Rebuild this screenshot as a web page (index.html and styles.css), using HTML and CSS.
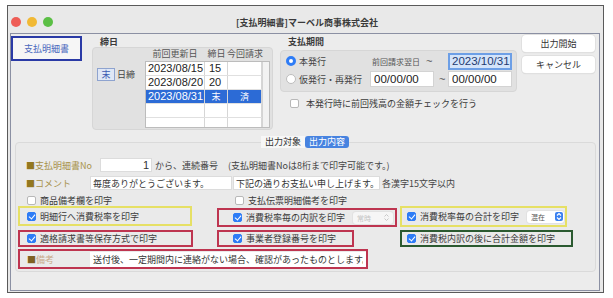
FILE: index.html
```html
<!DOCTYPE html>
<html>
	<head>
		<meta charset="utf-8">
		<title>支払明細書</title>
		<link rel="stylesheet" href="styles.css">
	</head>
	<body>
		<div class="window">
			<div class="titlebar">
				<div class="lights">
					<span class="dot red"></span>
					<span class="dot yellow"></span>
					<span class="dot green"></span>
				</div>
				<div class="title">[支払明細書]マーベル商事株式会社</div>
			</div>
			<div class="content">
				<div class="top">
					<div class="side">
						<div class="side-tab">支払明細書</div>
					</div>
					<div class="shime">
						<div class="group-label">締日</div>
						<div class="group shime-box">
							<div class="matsu"><span class="matsu-key">末</span>日締</div>
							<div class="table-col">
								<div class="thead">
									<span>前回更新日</span><span>締日</span><span>今回請求</span>
								</div>
								<div class="tbox">
									<div class="tbody">
										<div class="trow"><span>2023/08/15</span><span>15</span><span></span></div>
										<div class="trow"><span>2023/08/20</span><span>20</span><span></span></div>
										<div class="trow sel"><span>2023/08/31</span><span class="c">末</span><span class="c">済</span></div>
										<div class="trow"><span></span><span></span><span></span></div>
										<div class="trow"><span></span><span></span><span></span></div>
									</div>
									<div class="strip"></div>
								</div>
							</div>
						</div>
					</div>
					<div class="period">
						<div class="group-label">支払期間</div>
						<div class="group period-box">
							<div class="prow">
								<label class="opt"><span class="rb on"></span>本発行</label>
								<div class="mid"><span class="from">前回請求翌日</span><span class="tilde">~</span></div>
								<input class="date focus" value="2023/10/31">
							</div>
							<div class="prow">
								<label class="opt"><span class="rb"></span>仮発行・再発行</label>
								<div class="mid"><input class="date" value="00/00/00"><span class="tilde">~</span></div>
								<input class="date" value="00/00/00">
							</div>
						</div>
						<label class="ck check-row"><span class="cb"></span>本発行時に前回残高の金額チェックを行う</label>
					</div>
					<div class="buttons">
						<div class="btn">出力開始</div>
						<div class="btn">キャンセル</div>
					</div>
				</div>

				<div class="tabs">
					<span class="tab">出力対象</span><span class="tab on">出力内容</span>
				</div>

				<div class="panel">
					<div class="row r1">
						<span class="lbl w74"><b>■</b>支払明細書No</span>
						<input class="field no" value="1">
						<span class="after">から、連続番号</span>
						<span class="note">(支払明細書Noは8桁まで印字可能です。)</span>
					</div>
					<div class="row r2">
						<span class="lbl w64"><b>■</b>コメント</span>
						<input class="field c1" value="毎度ありがとうございます。">
						<input class="field c2" value="下記の通りお支払い申し上げます。">
						<span class="hint">各漢字15文字以内</span>
					</div>
					<div class="row r3">
						<label class="ck w208"><span class="cb"></span>商品備考欄を印字</label>
						<label class="ck"><span class="cb"></span>支払伝票明細備考を印字</label>
					</div>
					<div class="grid r4">
						<div class="mark yellow b1"><label class="ck"><span class="cb on"></span>明細行へ消費税率を印字</label></div>
						<div class="mark red b2">
							<label class="ck"><span class="cb on"></span>消費税率毎の内訳を印字</label>
							<span class="pop off">常時<svg width="7" height="9" viewBox="0 0 7 9"><path d="M1.5 3.5L3.5 1.5L5.5 3.5M1.5 5.5L3.5 7.5L5.5 5.5" stroke="#c8c8c8" fill="none" stroke-width="1"/></svg></span>
						</div>
						<div class="mark yellow b3">
							<label class="ck"><span class="cb on"></span>消費税率毎の合計を印字</label>
							<span class="pop">混在<span class="step"><svg width="8" height="9" viewBox="0 0 8 9"><path d="M2 3.5L4 1.5L6 3.5M2 5.5L4 7.5L6 5.5" stroke="#fff" fill="none" stroke-width="1.2"/></svg></span></span>
						</div>
					</div>
					<div class="grid r5">
						<div class="mark red b4"><label class="ck"><span class="cb on"></span>適格請求書等保存方式で印字</label></div>
						<div class="mark red b5"><label class="ck"><span class="cb on"></span>事業者登録番号を印字</label></div>
						<div class="mark green b6"><label class="ck"><span class="cb on"></span>消費税内訳の後に合計金額を印字</label></div>
					</div>
					<div class="row r6">
						<div class="mark red b7">
							<span class="lbl w63 faded"><b>■</b>備考</span>
							<input class="field memo" value="送付後、一定期間内に連絡がない場合、確認があったものとします。">
						</div>
					</div>
				</div>
			</div>
		</div>
	</body>
</html>
```

FILE: styles.css
```css
* {
	margin: 0;
	padding: 0;
	box-sizing: border-box;
}

body {
	background: #fff;
	font-family: "Noto Sans CJK JP", "Liberation Sans", sans-serif;
	font-size: 9px;
	color: #333;
}

input {
	font: inherit;
	color: inherit;
	outline: none;
}

.window {
	width: 597px;
	height: 288px;
	margin: 5px 0 0 7px;
	border: 1px solid #5a5a5a;
	background: #e8e8e8;
	display: flex;
	flex-direction: column;
}

/* title bar */
.titlebar {
	height: 27px;
	display: grid;
	grid-template-columns: 1fr auto 1fr;
	align-items: center;
	padding: 5px 0 0 3px;
	background: #e9e9e9;
}

.lights {
	display: flex;
	gap: 6px;
}

.dot {
	width: 10px;
	height: 10px;
	border-radius: 50%;
}

.dot.red { background: #ee5d56; }
.dot.yellow { background: #f1b935; }
.dot.green { background: #5bbf45; }

.title {
	font-weight: bold;
	color: #3a3a3a;
}

.content {
	flex: 1;
	margin: 0 3px 1px 2px;
	border: 1px solid #8b90a3;
	background: #ececec;
}

/* upper area */
.top {
	display: flex;
	height: 102px;
}

.side {
	width: 81px;
	padding-top: 2px;
}

.side-tab {
	width: 71px;
	height: 25px;
	border: 2px solid #2a3aa6;
	background: #f6f6f6;
	color: #4a68bd;
	display: flex;
	align-items: center;
	justify-content: center;
}

.group-label {
	margin-top: 3px;
	padding-left: 8px;
	height: 10px;
	line-height: 10px;
	font-weight: bold;
	color: #3a3a3a;
}

.group {
	background: #e1e1e1;
	border: 1px solid #d6d6d6;
	border-radius: 4px;
}

.shime {
	width: 181px;
}

.shime-box {
	height: 83px;
	display: flex;
}

.matsu {
	width: 52px;
	padding: 20px 0 0 4px;
	display: flex;
	align-items: flex-start;
	gap: 2px;
	line-height: 13px;
	color: #444;
}

.matsu-key {
	width: 18px;
	height: 13px;
	border: 1px solid #8ea3cf;
	background: #dfe7f6;
	color: #3c5ab2;
	text-align: center;
	line-height: 11px;
}

.thead {
	display: grid;
	grid-template-columns: 60px 23px 34px;
	height: 13px;
	line-height: 12px;
	text-align: center;
	white-space: nowrap;
	color: #555;
}

.thead span {
	display: flex;
	justify-content: center;
}

.tbox {
	width: 125px;
	height: 67px;
	border: 1px solid #bcbcbc;
	background: #fff;
	display: flex;
	overflow: hidden;
}

.tbody {
	width: 116px;
}

.trow {
	display: grid;
	grid-template-columns: 59px 23px 34px;
	height: 14px;
	border-bottom: 1px solid #e0e0e0;
	font-family: "Liberation Sans", "Noto Sans CJK JP", sans-serif;
	font-size: 11px;
	line-height: 13px;
	color: #222;
}

.trow span {
	border-right: 1px solid #d6d6d6;
	padding-left: 2px;
}

.trow span:nth-child(2) {
	padding-left: 4px;
}

.trow .c {
	text-align: center;
	padding-left: 0 !important;
	font-family: "Noto Sans CJK JP", sans-serif;
	font-size: 9px;
}

.trow.sel {
	background: #2c6bd6;
	color: #fff;
}

.strip {
	width: 7px;
	background: #f2f2f2;
	border-left: 1px solid #d4d4d4;
}

/* period */
.period {
	width: 237px;
	margin-left: 7px;
}

.period-box {
	margin-top: 3px;
	height: 42px;
	padding: 1px 0 0 5px;
}

.prow {
	display: flex;
	align-items: center;
	height: 18px;
}

.opt {
	width: 84px;
	display: flex;
	align-items: center;
	gap: 3px;
	color: #444;
}

.mid {
	width: 78px;
	display: flex;
	align-items: center;
}

.from {
	padding-left: 2px;
	font-size: 8px;
	color: #555;
}

.tilde {
	margin-left: 6px;
	font-family: "Liberation Sans", sans-serif;
	font-size: 11px;
	color: #555;
}

.mid .date + .tilde {
	margin-left: 5px;
}

.date {
	width: 64px;
	height: 16px;
	border: 1px solid #d3d3d3;
	background: #fff;
	padding-left: 3px;
	font-family: "Liberation Sans", sans-serif;
	font-size: 11.5px;
	color: #222;
}

.date.focus {
	border: 2px solid #6d9fe6;
	background: #d4e4fa;
	padding-left: 2px;
	color: #1e3a70;
	height: 17px;
}

.rb {
	width: 10px;
	height: 10px;
	border-radius: 50%;
	border: 1px solid #bdbdbd;
	background: #fff;
	flex: none;
}

.rb.on {
	border: 3px solid #2e7cf6;
}

.cb {
	width: 9px;
	height: 9px;
	border: 1px solid #b8b8b8;
	border-radius: 2px;
	background: #fff;
	flex: none;
	position: relative;
}

.cb.on {
	background: #2e7cf6;
	border-color: #2e7cf6;
}

.cb.on::after {
	content: '';
	position: absolute;
	left: 2px;
	top: 0;
	width: 3px;
	height: 5px;
	border: solid #fff;
	border-width: 0 1.5px 1.5px 0;
	transform: rotate(40deg);
}

.ck {
	display: flex;
	align-items: center;
	gap: 4px;
	white-space: nowrap;
	flex: none;
	color: #3a3a3a;
}

.check-row {
	margin: 6px 0 0 10px;
	height: 11px;
	gap: 7px;
}

.buttons {
	width: 73px;
	margin-left: 5px;
	padding-top: 1px;
	display: flex;
	flex-direction: column;
	gap: 4px;
}

.btn {
	height: 17px;
	background: #fff;
	border-radius: 4px;
	box-shadow: 0 0 0 1px #e0e0e0, 0 1px 1px rgba(0, 0, 0, .12);
	display: flex;
	align-items: center;
	justify-content: center;
	color: #333;
}

/* tab view */
.tabs {
	display: flex;
	justify-content: center;
	height: 12px;
	position: relative;
	z-index: 1;
}

.tab {
	padding: 0 4px;
	line-height: 12px;
	background: #f7f7f7;
	color: #333;
}

.tab.on {
	background: #4783e0;
	color: #fff;
	border-radius: 3px;
}

.panel {
	margin: -6px 3px 0 4px;
	height: 130px;
	border: 1px solid #dadada;
	border-radius: 4px;
	background: #eaeaea;
	padding-top: 15px;
}

.row {
	display: flex;
	align-items: center;
	padding-left: 10px;
}

.lbl {
	color: #a8924a;
	flex: none;
}

.lbl b {
	font-weight: normal;
	color: #93781f;
}

.lbl.faded {
	color: #c9ab8c;
}

.lbl.faded b {
	color: #7f6222;
}

.w74 { width: 74px; }
.w64 { width: 64px; }
.w63 { width: 63px; }
.w208 { width: 208px; }

.field {
	height: 14px;
	border: 1px solid #dcdcdc;
	background: #fff;
	padding: 0 2px;
	color: #333;
}

.r1 { height: 14px; }

.no {
	width: 52px;
	text-align: right;
	font-family: "Liberation Sans", sans-serif;
	font-size: 11px;
}

.after { margin-left: 3px; color: #444; }
.note { margin-left: 10px; color: #444; }

.r2 {
	height: 14px;
	margin-top: 4px;
}

.c1 { width: 142px; }
.c2 { width: 147px; margin-left: 1px; }
.hint { margin-left: 2px; color: #444; }

.r3 {
	height: 11px;
	margin-top: 5px;
	padding-left: 11px;
}

.grid {
	display: grid;
	grid-template-columns: 199px 183px auto;
	align-items: start;
	padding-left: 2px;
}

.r4 { height: 21px; }

.r5 {
	height: 17px;
	margin-top: 3px;
}

.mark {
	display: flex;
	align-items: center;
	border: 2px solid;
}

.mark.yellow { border-color: #e6e065; }
.mark.red { border-color: #be3550; }
.mark.green { border-color: #2b5a30; }

.b1 { width: 174px; height: 20px; padding-left: 7px; }
.b2 { width: 180px; height: 19px; margin-top: 2px; padding-left: 14px; gap: 8px; }
.b3 { width: 167px; height: 21px; padding-left: 5px; gap: 8px; }
.b4 { width: 175px; height: 17px; padding-left: 7px; }
.b5 { width: 137px; height: 17px; padding-left: 14px; }
.b6 { width: 173px; height: 17px; padding-left: 5px; }

.pop {
	width: 37px;
	height: 12px;
	flex: none;
	display: flex;
	align-items: center;
	justify-content: space-between;
	padding: 0 1px 0 4px;
	font-size: 7px;
	background: #fff;
	border-radius: 3px;
	box-shadow: 0 0 0 1px #e2e2e2;
	color: #555;
}

.pop.off {
	width: 40px;
	background: #f6f6f6;
	color: #c4c4c4;
	padding-right: 3px;
}

.step {
	width: 8px;
	height: 9px;
	background: #3a80f0;
	border-radius: 2px;
	display: flex;
}

.r6 {
	height: 20px;
	margin-top: 2px;
	padding-left: 2px;
}

.b7 {
	width: 350px;
	height: 20px;
	padding-left: 7px;
}

.memo {
	flex: 1;
	height: 15px;
	border-color: #fff;
}
```
